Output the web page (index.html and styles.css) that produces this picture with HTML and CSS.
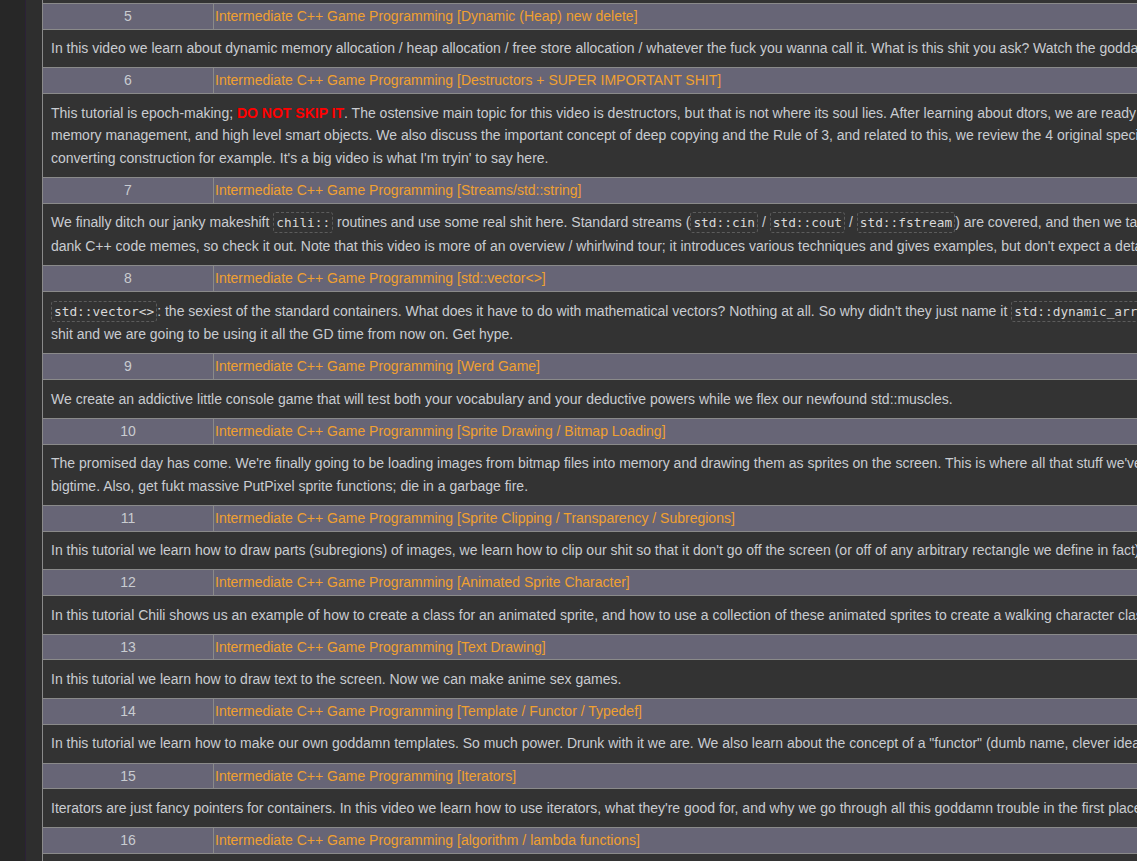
FILE: index.html
```html
<!DOCTYPE html>
<html lang="en">
<head>
    <meta charset="UTF-8">
    <meta name="viewport" content="width=device-width, initial-scale=1.0">
    <title>Intermediate C++ Game Programming</title>
    <link rel="stylesheet" href="styles.css">
</head>
<body>
    <div class="rail"></div>
    <div class="gutter"></div>
    <main class="list">
        <table class="episodes">
            <tr class="ep-head">
                <td class="ep-num">5</td>
                <td class="ep-title">Intermediate C++ Game Programming [Dynamic (Heap) new delete]</td>
            </tr>
            <tr class="ep-desc">
                <td colspan="2">In this video we learn about dynamic memory allocation / heap allocation / free store allocation / whatever the fuck you wanna call it. What is this shit you ask? Watch the goddamn video and find out.</td>
            </tr>

            <tr class="ep-head">
                <td class="ep-num">6</td>
                <td class="ep-title">Intermediate C++ Game Programming [Destructors + SUPER IMPORTANT SHIT]</td>
            </tr>
            <tr class="ep-desc">
                <td colspan="2">This tutorial is epoch-making; <span class="shout">DO NOT SKIP IT</span>. The ostensive main topic for this video is destructors, but that is not where its soul lies. After learning about dtors, we are ready to tackle RAII,<br>memory management, and high level smart objects. We also discuss the important concept of deep copying and the Rule of 3, and related to this, we review the 4 original special member functions and their pitfalls, such as<br>converting construction for example. It's a big video is what I'm tryin' to say here.</td>
            </tr>

            <tr class="ep-head">
                <td class="ep-num">7</td>
                <td class="ep-title">Intermediate C++ Game Programming [Streams/std::string]</td>
            </tr>
            <tr class="ep-desc">
                <td colspan="2">We finally ditch our janky makeshift <code>chili::</code> routines and use some real shit here. Standard streams (<code>std::cin</code> / <code>std::cout</code> / <code>std::fstream</code>) are covered, and then we take a look at <code>std::string</code> and a bunch of<br>dank C++ code memes, so check it out. Note that this video is more of an overview / whirlwind tour; it introduces various techniques and gives examples, but don't expect a detailed treatment.</td>
            </tr>

            <tr class="ep-head">
                <td class="ep-num">8</td>
                <td class="ep-title">Intermediate C++ Game Programming [std::vector&lt;&gt;]</td>
            </tr>
            <tr class="ep-desc">
                <td colspan="2"><code>std::vector&lt;&gt;</code>: the sexiest of the standard containers. What does it have to do with mathematical vectors? Nothing at all. So why didn't they just name it <code>std::dynamic_array</code>? Who knows. Anyways, it's the<br>shit and we are going to be using it all the GD time from now on. Get hype.</td>
            </tr>

            <tr class="ep-head">
                <td class="ep-num">9</td>
                <td class="ep-title">Intermediate C++ Game Programming [Werd Game]</td>
            </tr>
            <tr class="ep-desc">
                <td colspan="2">We create an addictive little console game that will test both your vocabulary and your deductive powers while we flex our newfound std::muscles.</td>
            </tr>

            <tr class="ep-head">
                <td class="ep-num">10</td>
                <td class="ep-title">Intermediate C++ Game Programming [Sprite Drawing / Bitmap Loading]</td>
            </tr>
            <tr class="ep-desc">
                <td colspan="2">The promised day has come. We're finally going to be loading images from bitmap files into memory and drawing them as sprites on the screen. This is where all that stuff we've learned starts paying off<br>bigtime. Also, get fukt massive PutPixel sprite functions; die in a garbage fire.</td>
            </tr>

            <tr class="ep-head">
                <td class="ep-num">11</td>
                <td class="ep-title">Intermediate C++ Game Programming [Sprite Clipping / Transparency / Subregions]</td>
            </tr>
            <tr class="ep-desc">
                <td colspan="2">In this tutorial we learn how to draw parts (subregions) of images, we learn how to clip our shit so that it don't go off the screen (or off of any arbitrary rectangle we define in fact), and we learn chroma keying.</td>
            </tr>

            <tr class="ep-head">
                <td class="ep-num">12</td>
                <td class="ep-title">Intermediate C++ Game Programming [Animated Sprite Character]</td>
            </tr>
            <tr class="ep-desc">
                <td colspan="2">In this tutorial Chili shows us an example of how to create a class for an animated sprite, and how to use a collection of these animated sprites to create a walking character class.</td>
            </tr>

            <tr class="ep-head">
                <td class="ep-num">13</td>
                <td class="ep-title">Intermediate C++ Game Programming [Text Drawing]</td>
            </tr>
            <tr class="ep-desc">
                <td colspan="2">In this tutorial we learn how to draw text to the screen. Now we can make anime sex games.</td>
            </tr>

            <tr class="ep-head">
                <td class="ep-num">14</td>
                <td class="ep-title">Intermediate C++ Game Programming [Template / Functor / Typedef]</td>
            </tr>
            <tr class="ep-desc">
                <td colspan="2">In this tutorial we learn how to make our own goddamn templates. So much power. Drunk with it we are. We also learn about the concept of a "functor" (dumb name, clever idea) and about typedef.</td>
            </tr>

            <tr class="ep-head">
                <td class="ep-num">15</td>
                <td class="ep-title">Intermediate C++ Game Programming [Iterators]</td>
            </tr>
            <tr class="ep-desc">
                <td colspan="2">Iterators are just fancy pointers for containers. In this video we learn how to use iterators, what they're good for, and why we go through all this goddamn trouble in the first place.</td>
            </tr>

            <tr class="ep-head">
                <td class="ep-num">16</td>
                <td class="ep-title">Intermediate C++ Game Programming [algorithm / lambda functions]</td>
            </tr>
            <tr class="ep-desc">
                <td colspan="2">The standard library algorithms are where the real power is at, and lambda functions make them sexy as hell.</td>
            </tr>
        </table>
    </main>
</body>
</html>
```

FILE: styles.css
```css
html, body {
    margin: 0;
    padding: 0;
    height: 100%;
}
body {
    display: flex;
    overflow: hidden;
    background-color: #2e2e2e;
    font-family: "Liberation Sans", Arial, sans-serif;
    font-size: 14px;
    line-height: 22.7px;
    color: #c9ccd1;
}
.rail {
    flex: 0 0 25px;
    background-color: #272727;
    border-right: 1px solid #2c2138;
}
.gutter {
    flex: 0 0 16px;
    background-color: #2e2e2e;
}
.list {
    flex: 0 0 1800px;
    padding-top: 3px;
    background-color: #333333;
    border-left: 1px solid #8a8a8a;
    align-self: flex-start;
}
.episodes {
    width: 100%;
    border-collapse: collapse;
}
.episodes td {
    padding: 0;
}
.ep-head td {
    background-color: #676576;
    border-top: 1px solid #8a8a8a;
    border-bottom: 1px solid #8a8a8a;
    padding: 1px 2px;
}
.ep-head .ep-num {
    width: 166px;
    text-align: center;
    color: #c9ccd1;
    border-right: 1px solid #8a8a8a;
}
.ep-head .ep-title {
    color: #f0a030;
    padding-left: 1px;
}
.ep-desc td {
    background-color: #333333;
    padding: 7.5px 8px;
}
.shout {
    color: #ff0000;
    font-weight: bold;
}
code {
    font-family: "DejaVu Sans Mono", monospace;
    font-size: 12.8px;
    color: #d8d8d8;
    padding: 2px 2px;
    border: 1px dashed #5c5c5c;
    border-radius: 3px;
}
```
